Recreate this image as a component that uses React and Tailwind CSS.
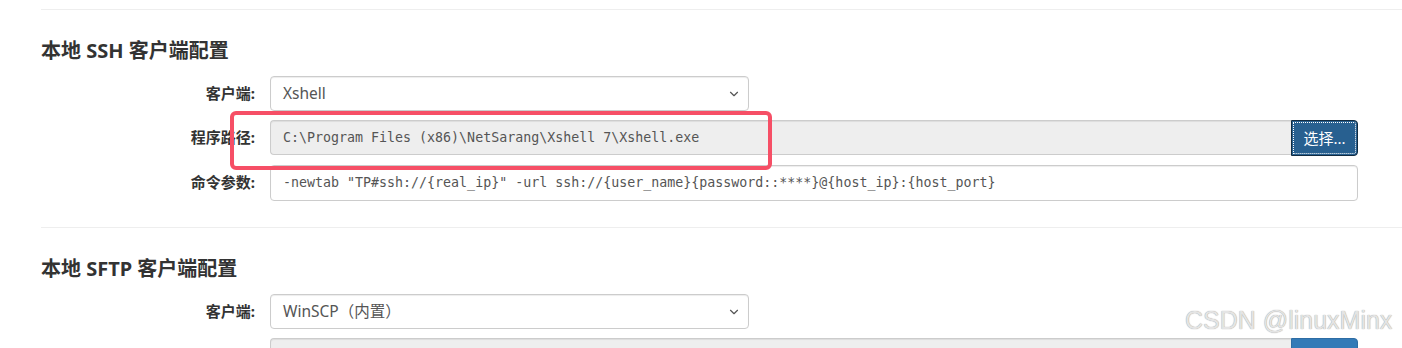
import { ChevronDown } from 'lucide-react';

const mono = "font-['DejaVu_Sans_Mono','Liberation_Mono',monospace]";

function Label({ children }) {
    return (
        <div className="w-[214px] shrink-0 text-right text-[15px] font-bold text-[#333] leading-[35px]">
            {children}
        </div>
    );
}

function SelectBox({ value }) {
    return (
        <div className="w-[479px] h-[35px] flex items-center justify-between border border-[#ccc] rounded-[4px] bg-white pl-[12px] pr-[7px] shadow-[inset_0_1px_1px_rgba(0,0,0,0.075)]">
            <span className="text-[15.5px] text-[#555]">{value}</span>
            <ChevronDown className="w-[14px] h-[14px] text-[#555]" strokeWidth={2} />
        </div>
    );
}

function PathRow({ value, focused, label = '选择...' }) {
    return (
        <div className="flex items-start w-[1088px]">
            <div className={`flex-1 h-[35px] flex items-center border border-[#ccc] border-r-0 rounded-l-[4px] bg-[#eee] pl-[12px] text-[13.3px] text-[#555] shadow-[inset_0_1px_1px_rgba(0,0,0,0.075)] ${mono}`}>
                {value}
            </div>
            <button
                className={`w-[67px] h-[36px] rounded-r-[4px] text-white text-[15px] border ${
                    focused
                        ? 'bg-[#286090] border-[#122b40] outline-1 outline-dotted outline-white -outline-offset-[3px]'
                        : 'bg-[#337ab7] border-[#2e6da4]'
                }`}
            >
                {label}
            </button>
        </div>
    );
}

function Section({ title, children }) {
    return (
        <div className="border-t border-[#eee] pb-[26px]">
            <h2 className="mt-[27px] h-[28px] leading-[28px] text-[20px] font-bold text-[#333]">{title}</h2>
            <div className="mt-[11px] flex flex-col gap-[9px]">{children}</div>
        </div>
    );
}

export default function App() {
    return (
        <div className="relative h-[348px] w-full overflow-hidden bg-white font-['Noto_Sans','Noto_Sans_CJK_SC',sans-serif]">
            <div className="pl-[41px] pt-[9px]">
                {/* SSH client */}
                <Section title="本地 SSH 客户端配置">
                    <div className="flex gap-[15px]">
                        <Label>客户端:</Label>
                        <SelectBox value="Xshell" />
                    </div>
                    <div className="flex gap-[15px]">
                        <Label>程序路径:</Label>
                        <PathRow value="C:\Program Files (x86)\NetSarang\Xshell 7\Xshell.exe" focused />
                    </div>
                    <div className="flex gap-[15px]">
                        <Label>命令参数:</Label>
                        <div className={`w-[1088px] h-[36px] flex items-center border border-[#ccc] rounded-[4px] bg-white pl-[12px] text-[13.3px] text-[#555] shadow-[inset_0_1px_1px_rgba(0,0,0,0.075)] ${mono}`}>
                            {'-newtab "TP#ssh://{real_ip}" -url ssh://{user_name}{password::****}@{host_ip}:{host_port}'}
                        </div>
                    </div>
                </Section>

                {/* SFTP client */}
                <Section title="本地 SFTP 客户端配置">
                    <div className="flex gap-[15px]">
                        <Label>客户端:</Label>
                        <SelectBox value="WinSCP（内置）" />
                    </div>
                    {/* next row, only its top edge is in view */}
                    <div className="flex gap-[15px]">
                        <Label />
                        <PathRow value="" label="" />
                    </div>
                </Section>
            </div>

            {/* red highlight annotation */}
            <div className="absolute left-[230px] top-[111px] w-[542px] h-[59px] border-[4px] border-[#f64f66] rounded-[6px]" />

            {/* watermark */}
            <div className="absolute left-[1185px] top-[304px] text-[25px] leading-[32px] text-[#e4e4e4] font-['Liberation_Sans',Arial,sans-serif] [text-shadow:0_0_1px_#8a8a8a]">
                CSDN @linuxMinx
            </div>
        </div>
    );
}
